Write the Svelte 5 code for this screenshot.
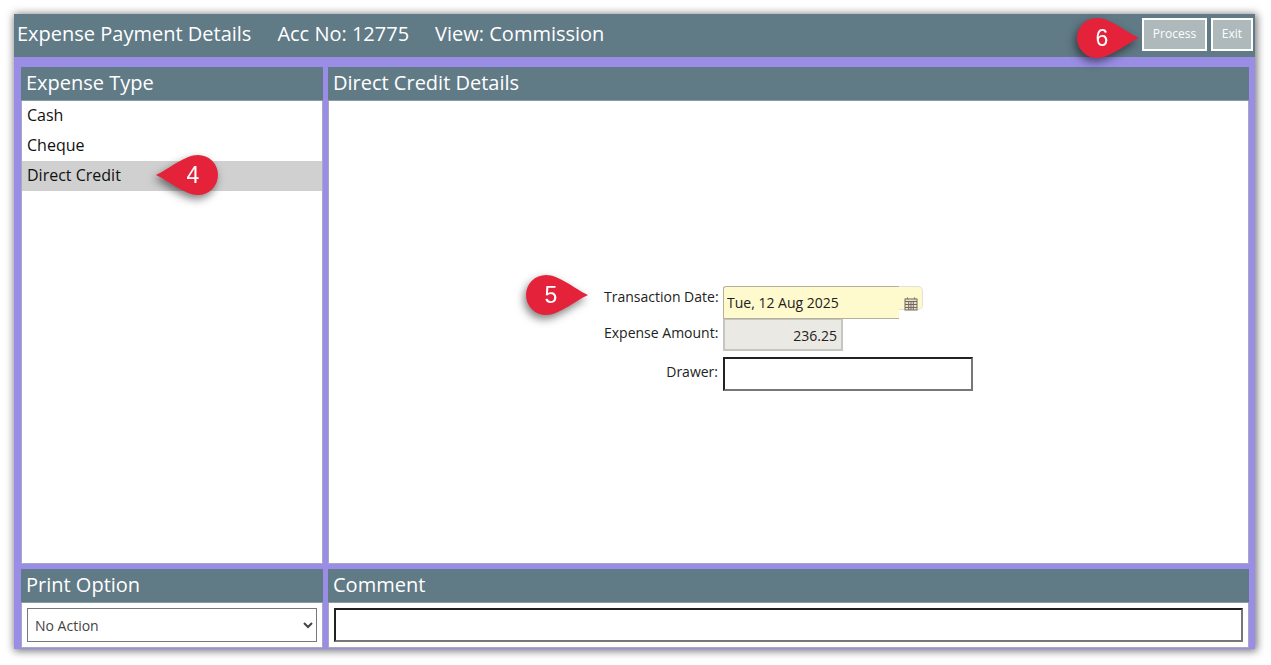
<script>
  const types = ['Cash', 'Cheque', 'Direct Credit'];
  const selected = 'Direct Credit';
  const callouts = [
    { n: 4, cls: 'c4', flip: true },
    { n: 5, cls: 'c5', flip: false },
    { n: 6, cls: 'c6', flip: false }
  ];
</script>

<div class="page">
  <div class="frame">
    <header class="topbar">
      <span>Expense Payment Details</span>
      <span>Acc No: 12775</span>
      <span>View: Commission</span>
      <div class="actions">
        <button class="process">Process</button>
        <button class="exit">Exit</button>
      </div>
    </header>

    <div class="grid">
      <section class="panel">
        <h2>Expense Type</h2>
        <ul class="body list">
          {#each types as t}
            <li class:sel={t === selected}>{t}</li>
          {/each}
        </ul>
      </section>

      <section class="panel">
        <h2>Direct Credit Details</h2>
        <div class="body center">
          <div class="form">
            <label class="l1" for="date">Transaction Date:</label>
            <div class="datewrap">
              <input id="date" class="date" value="Tue, 12 Aug 2025" />
              <span class="cal">
                <svg width="14" height="14" viewBox="0 0 14 14" fill="none" stroke="#75685e" stroke-width="1">
                  <path d="M3.5 .5v2.5M10.5 .5v2.5" stroke-width="1.2" />
                  <rect x="1" y="2" width="12" height="11" fill="#e8e3cf" />
                  <path d="M1 4.5h12M1 7.5h12M1 10.5h12M4.7 4.5V13M7 4.5V13M9.3 4.5V13" />
                </svg>
              </span>
            </div>
            <label class="l2" for="amt">Expense Amount:</label>
            <input id="amt" class="amount" value="236.25" readonly />
            <label class="l3" for="drawer">Drawer:</label>
            <input id="drawer" class="text drawer" />
          </div>
        </div>
      </section>

      <section class="panel">
        <h2>Print Option</h2>
        <div class="body foot">
          <select class="print">
            <option>No Action</option>
          </select>
        </div>
      </section>

      <section class="panel">
        <h2>Comment</h2>
        <div class="body foot">
          <input class="text comment" />
        </div>
      </section>
    </div>
  </div>

  {#each callouts as c}
    <div class="callout {c.cls}">
      <svg width="62" height="40" viewBox="0 0 62 40" class:flip={c.flip}>
        <path d="M20 0C33 0 49 14 62 20C49 26 33 40 20 40A20 20 0 0 1 20 0Z" fill="#e4233a" />
      </svg>
      <span>{c.n}</span>
    </div>
  {/each}
</div>

<style>
  :global(body) {
    margin: 0;
    background: #fff;
    font-family: "Open Sans", sans-serif;
  }
  .page {
    position: relative;
    width: 1271px;
    height: 665px;
    padding: 14px 16px 16px 14px;
    box-sizing: border-box;
    overflow: hidden;
  }
  .frame {
    height: 635px;
    background: #998de6;
    box-shadow: 1px 1px 8px 1px rgba(0, 0, 0, 0.55);
    display: flex;
    flex-direction: column;
  }
  .topbar {
    height: 43px;
    background: #607a86;
    color: #fff;
    font-size: 20px;
    display: flex;
    align-items: center;
    gap: 26px;
    padding: 0 2px 5px 3px;
    box-sizing: border-box;
    flex: none;
  }
  .actions {
    margin-left: auto;
    display: flex;
    gap: 4px;
    align-self: flex-start;
    margin-top: 4px;
  }
  button {
    height: 33px;
    background: #adb9bb;
    border: 2px solid #fff;
    color: #fff;
    font: 12px "Open Sans", sans-serif;
    padding: 0 0 2px;
    box-sizing: border-box;
  }
  .process { width: 65px; }
  .exit { width: 42px; }
  .grid {
    flex: 1;
    display: grid;
    grid-template-columns: 302px 921px;
    grid-template-rows: 497px 79px;
    gap: 5px;
    padding: 10px 6px 1px 7px;
  }
  .panel {
    display: flex;
    flex-direction: column;
    min-height: 0;
  }
  h2 {
    margin: 0;
    height: 34px;
    flex: none;
    background: #607a86;
    color: #fff;
    font-size: 20px;
    font-weight: 400;
    line-height: 32px;
    padding-left: 5px;
    box-sizing: border-box;
    border-bottom: 1px solid #8a9ba2;
  }
  .body {
    flex: 1;
    background: #fff;
    border: 1px solid #a9a8c4;
    border-top: 0;
    min-height: 0;
  }
  .list {
    list-style: none;
    margin: 0;
    padding: 0;
  }
  .list li {
    height: 30px;
    line-height: 28px;
    font-size: 16px;
    padding-left: 5px;
    color: #111;
  }
  .list li.sel { background: #d0d0d0; }
  .center {
    display: flex;
    justify-content: center;
    align-items: center;
    padding-top: 13px;
    box-sizing: border-box;
  }
  .form {
    display: grid;
    grid-template-columns: 114px 250px;
    grid-template-rows: 32px 33px 40px;
    column-gap: 5px;
    width: 369px;
    font-size: 14px;
    color: #222;
  }
  label {
    text-align: right;
    line-height: 20px;
    white-space: nowrap;
  }
  .l1 { padding-top: 1px; }
  .l2 { padding-top: 5px; }
  .l3 { padding-top: 11px; }
  input {
    font: 14px "Open Sans", sans-serif;
    color: #222;
    outline: 0;
    box-sizing: border-box;
    margin: 0;
  }
  .datewrap {
    display: flex;
    align-items: flex-start;
  }
  .date {
    width: 176px;
    height: 33px;
    background: #fffacd;
    border: 1px solid #b4b09c;
    border-right: 0;
    border-radius: 3px 0 0 0;
    padding: 0 0 1px 3px;
    position: relative;
    z-index: 1;
  }
  .cal {
    width: 24px;
    height: 24px;
    background: #fffacd;
    border: 1px solid #e4e2d8;
    border-left: 0;
    border-radius: 0 5px 5px 0;
    box-sizing: border-box;
    display: flex;
    align-items: flex-start;
    justify-content: center;
    padding-top: 10px;
  }
  .amount {
    width: 120px;
    height: 33px;
    background: #ebe9e3;
    border: 2px solid #c6c6c0;
    text-align: right;
    padding: 2px 4px 0 0;
  }
  .text {
    background: #fff;
    border-style: solid;
    border-width: 2px;
    border-color: #222 #777 #777 #222;
  }
  .drawer {
    width: 250px;
    height: 34px;
    margin-top: 6px;
  }
  .foot {
    display: flex;
    padding: 5px;
    box-sizing: border-box;
  }
  .print {
    width: 290px;
    height: 34px;
    background: #fff;
    border: 1px solid #777;
    font: 14px "Open Sans", sans-serif;
    color: #444;
    padding-left: 3px;
    border-radius: 0;
    outline: 0;
  }
  .comment {
    width: 909px;
    height: 34px;
  }
  .callout {
    position: absolute;
    width: 62px;
    height: 40px;
    filter: drop-shadow(-2px 4px 4px rgba(0, 0, 0, 0.5));
  }
  .callout svg { display: block; }
  .callout svg.flip { transform: scaleX(-1); }
  .callout span {
    position: absolute;
    top: 0;
    left: 0;
    width: 40px;
    height: 40px;
    text-align: center;
    color: #fff;
    font: 23px/40px "Liberation Sans", sans-serif;
  }
  .c4 { left: 156px; top: 155px; }
  .c4 span { left: 17px; }
  .c5 { left: 526px; top: 275px; }
  .c5 span { left: 5px; }
  .c6 { left: 1077px; top: 18px; }
  .c6 span { left: 5px; }
</style>
